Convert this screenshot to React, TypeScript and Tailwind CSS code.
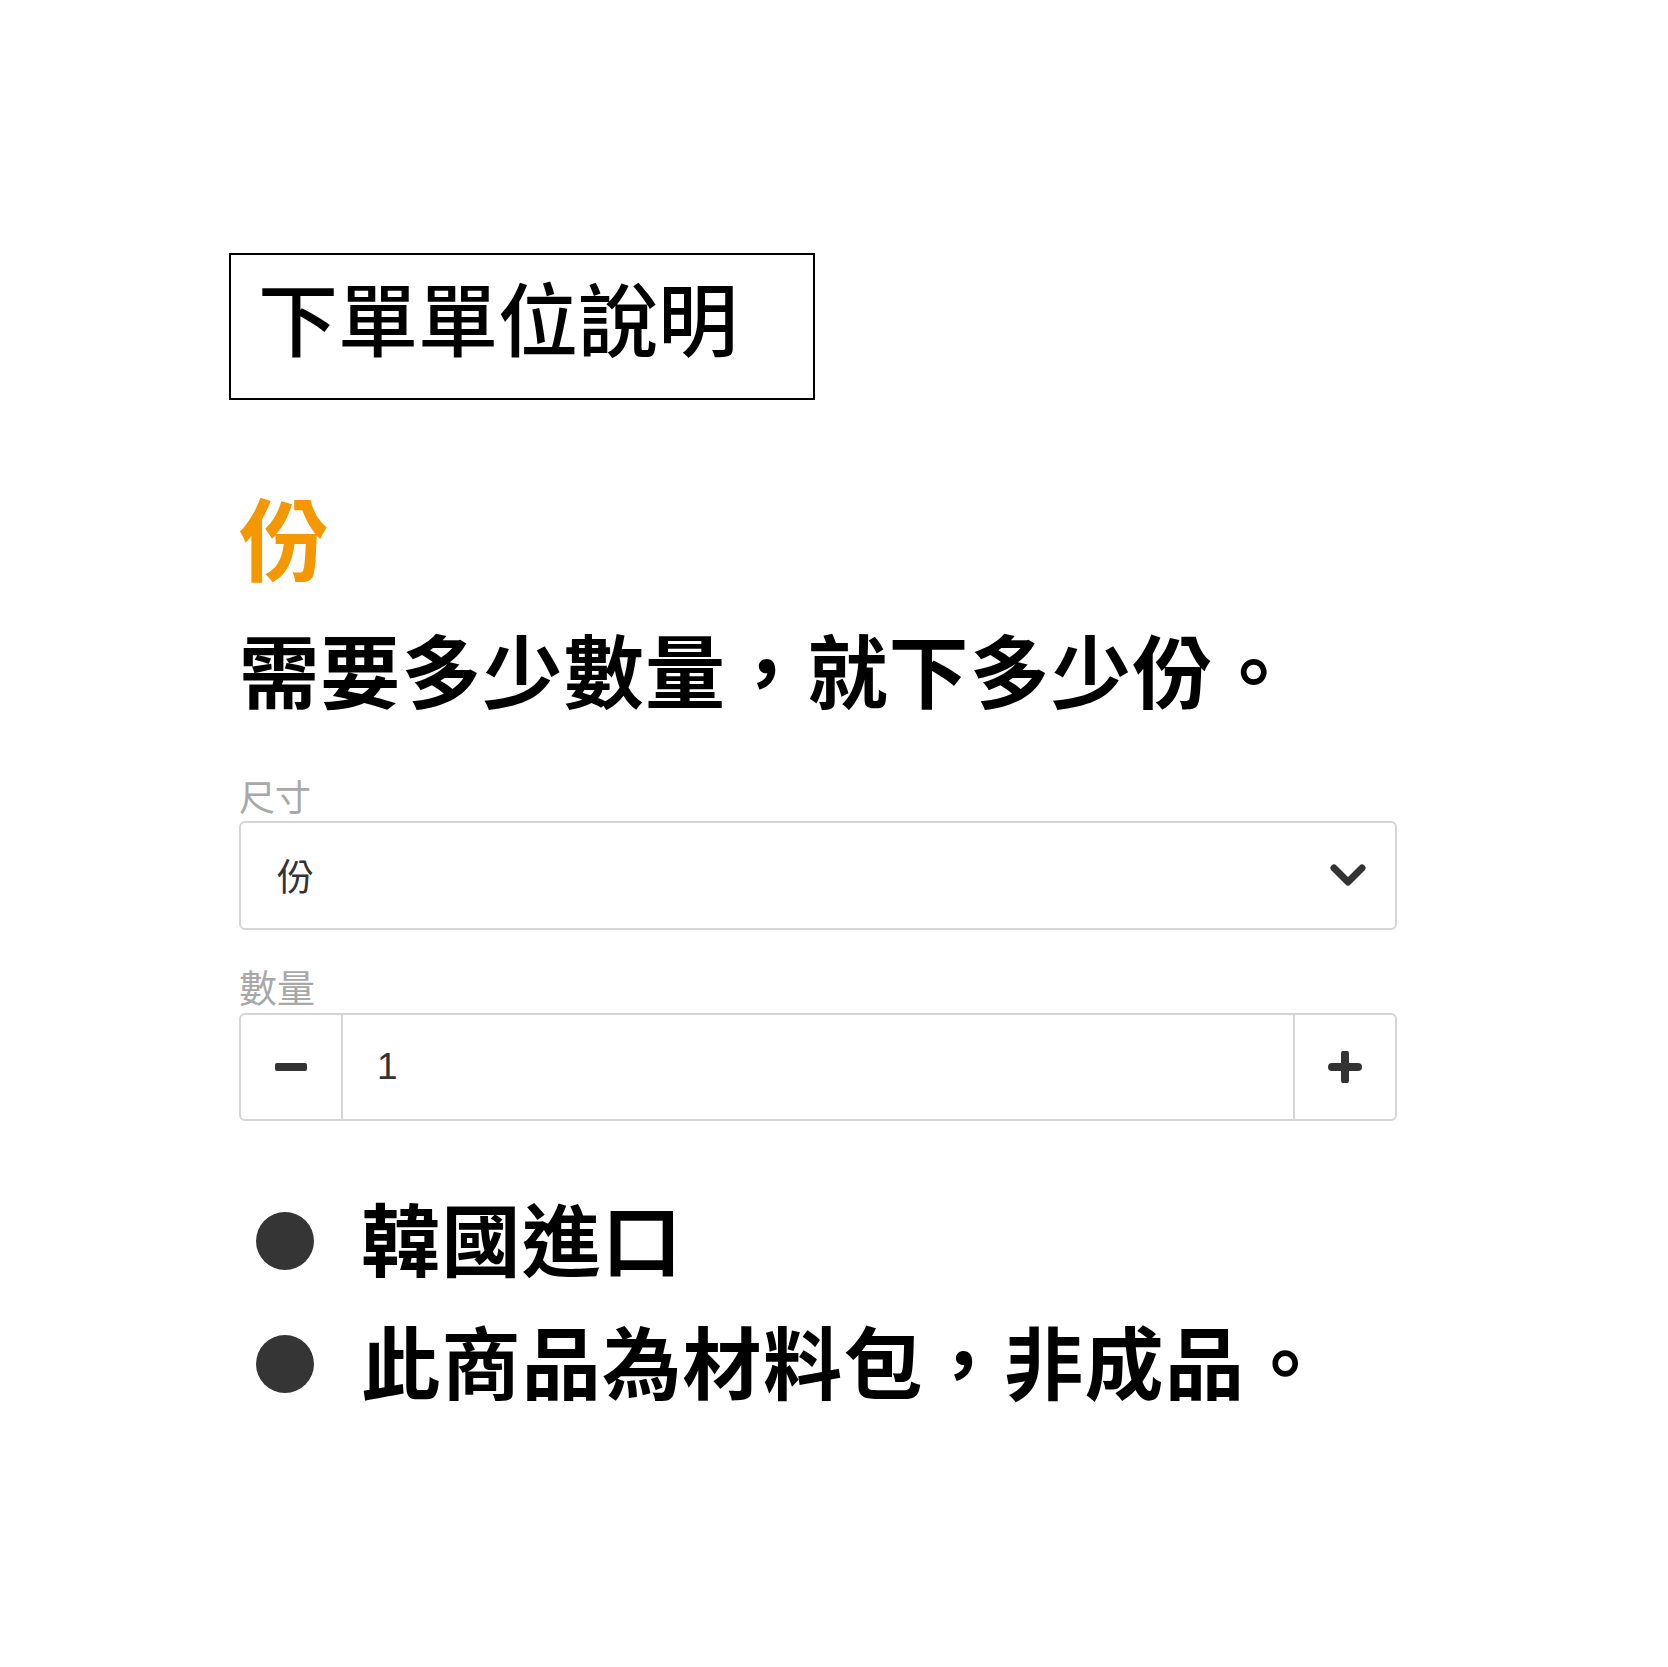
import React from "react";

const cjk = { fontFamily: '"Noto Sans CJK TC", "Noto Sans CJK SC", sans-serif' };

export default function App() {
  return (
    <div className="min-h-[1667px] w-[1668px] bg-white text-black" style={cjk}>
      <div className="pl-[229px] pt-[253px]">
        <div className="flex h-[147px] w-[586px] items-start border-2 border-black pl-[27px] pt-[20px]">
          <span className="text-[80px] font-medium leading-[80px] tracking-[0px]">下單單位說明</span>
        </div>
      </div>
      <div className="pl-[239px]">
        <div className="mt-[90px] text-[90px] font-bold leading-[90px] text-[#f39800]">份</div>
        <div className="mt-[47px] text-[80px] font-bold leading-[80px] tracking-[1.2px]">需要多少數量，就下多少份。</div>

        <div className="mt-[70px] text-[36px] leading-[36px] text-[#a8a8a8]">尺寸</div>
        <div className="mt-[8px] flex h-[109px] w-[1158px] items-center justify-between rounded-[6px] border-2 border-[#d6d6d6] pl-[36px] pr-[28px]">
          <span className="text-[37px] leading-[37px] text-[#333]">份</span>
          <svg width="38" height="26" viewBox="0 0 38 26">
            <path d="M5 5 L19 19 L33 5" fill="none" stroke="#333" strokeWidth="7" strokeLinecap="round" strokeLinejoin="round" />
          </svg>
        </div>

        <div className="mt-[37px] text-[38px] leading-[38px] text-[#a8a8a8]">數量</div>
        <div className="mt-[8px] flex h-[108px] w-[1158px]">
          <div className="flex w-[104px] items-center justify-center rounded-l-[6px] border-2 border-[#d6d6d6]">
            <div className="h-[8px] w-[32px] rounded-[2px] bg-[#333]" />
          </div>
          <div
            className="flex flex-1 items-center border-y-2 border-[#d6d6d6] pl-[34px] text-[37px] text-[#333]"
            style={{ fontFamily: '"Liberation Sans", sans-serif' }}
          >
            1
          </div>
          <div className="flex w-[104px] items-center justify-center rounded-r-[6px] border-2 border-[#d6d6d6]">
            <svg width="34" height="32" viewBox="0 0 34 32">
              <path d="M4 16 H30 M17 3 V29" fill="none" stroke="#333" strokeWidth="8" strokeLinecap="round" />
            </svg>
          </div>
        </div>

        <div className="mt-[76px] flex flex-col gap-[43px] pl-[17px]">
          <div className="flex items-start gap-[47px]">
            <div className="mt-[15px] h-[58px] w-[58px] shrink-0 rounded-full bg-[#353535]" />
            <span className="text-[79px] font-bold leading-[80px] tracking-[1.4px]">韓國進口</span>
          </div>
          <div className="flex items-start gap-[47px]">
            <div className="mt-[15px] h-[58px] w-[58px] shrink-0 rounded-full bg-[#353535]" />
            <span className="text-[79px] font-bold leading-[80px] tracking-[1.4px]">此商品為材料包，非成品。</span>
          </div>
        </div>
      </div>
    </div>
  );
}
